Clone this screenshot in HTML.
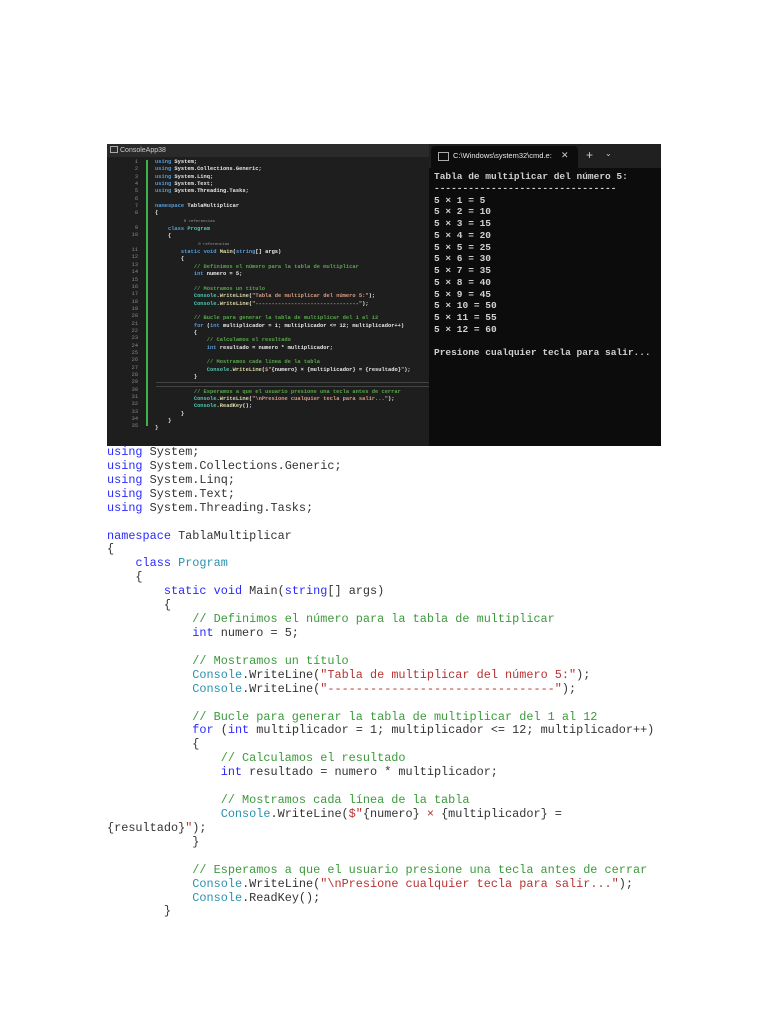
<!DOCTYPE html>
<html><head><meta charset="utf-8"><style>
body{margin:0;width:768px;height:1024px;background:#fff;position:relative;overflow:hidden;font-family:"Liberation Sans",sans-serif}
.abs{position:absolute}
pre{margin:0;font-family:"Liberation Mono",monospace}
.k{color:#2a2aff}.c{color:#3c9a3c}.s{color:#b83232}.t{color:#2b91af}
.ik{color:#569cd6}.it{color:#4ec9b0}.ic{color:#57a64a}.is{color:#d69d85}.im{color:#dcdcaa}
</style></head><body>
<!-- IDE -->
<div class="abs" style="left:107px;top:144px;width:322px;height:302px;background:#1e1e1e"></div>
<div class="abs" style="left:107px;top:144px;width:322px;height:13px;background:#2a2a2a;color:#ccc;font-size:7px;line-height:13px"><span style="display:inline-block;width:6px;height:5px;border:1px solid #aaa;margin:0 2px 0 3px;vertical-align:-1px"></span>ConsoleApp38</div>
<div class="abs" style="left:146px;top:160px;width:2px;height:266px;background:#3fb04a"></div>
<div class="abs" style="left:156px;top:382px;width:273px;height:1px;background:#444"></div>
<div class="abs" style="left:156px;top:386px;width:273px;height:1px;background:#444"></div>
<pre class="abs" style="left:120px;top:159px;width:18px;text-align:right;font-size:5.3px;line-height:7.35px;color:#8a8a8a">1
2
3
4
5
6
7
8

9
10

11
12
13
14
15
16
17
18
19
20
21
22
23
24
25
26
27
28
29
30
31
32
33
34
35</pre>
<pre class="abs" style="left:155px;top:159px;font-size:5.4px;line-height:7.35px;color:#e8e8e8;font-weight:bold"><span class="ik">using</span> System;
<span class="ik">using</span> System.Collections.Generic;
<span class="ik">using</span> System.Linq;
<span class="ik">using</span> System.Text;
<span class="ik">using</span> System.Threading.Tasks;

<span class="ik">namespace</span> TablaMultiplicar
{
<span style="font-size:4px;color:#999;font-weight:normal">            0 referencias</span>
    <span class="ik">class</span> <span class="it">Program</span>
    {
<span style="font-size:4px;color:#999;font-weight:normal">                  0 referencias</span>
        <span class="ik">static</span> <span class="ik">void</span> <span class="im">Main</span>(<span class="ik">string</span>[] args)
        {
            <span class="ic">// Definimos el número para la tabla de multiplicar</span>
            <span class="ik">int</span> numero = 5;

            <span class="ic">// Mostramos un título</span>
            <span class="it">Console</span>.<span class="im">WriteLine</span>(<span class="is">"Tabla de multiplicar del número 5:"</span>);
            <span class="it">Console</span>.<span class="im">WriteLine</span>(<span class="is">"--------------------------------"</span>);

            <span class="ic">// Bucle para generar la tabla de multiplicar del 1 al 12</span>
            <span class="ik">for</span> (<span class="ik">int</span> multiplicador = 1; multiplicador &lt;= 12; multiplicador++)
            {
                <span class="ic">// Calculamos el resultado</span>
                <span class="ik">int</span> resultado = numero * multiplicador;

                <span class="ic">// Mostramos cada línea de la tabla</span>
                <span class="it">Console</span>.<span class="im">WriteLine</span>(<span class="is">$"</span>{numero} × {multiplicador} = {resultado}<span class="is">"</span>);
            }

            <span class="ic">// Esperamos a que el usuario presione una tecla antes de cerrar</span>
            <span class="it">Console</span>.<span class="im">WriteLine</span>(<span class="is">"\nPresione cualquier tecla para salir..."</span>);
            <span class="it">Console</span>.<span class="im">ReadKey</span>();
        }
    }
}</pre>
<!-- Terminal -->
<div class="abs" style="left:429px;top:144px;width:232px;height:302px;background:#0c0c0c"></div>
<div class="abs" style="left:429px;top:144px;width:232px;height:24px;background:#202020"></div>
<div class="abs" style="left:431px;top:146px;width:147px;height:22px;background:#0c0c0c;border-radius:4px 4px 0 0"></div>
<div class="abs" style="left:438px;top:152px;width:9px;height:7px;border:1px solid #aaa"></div>
<div class="abs" style="left:453px;top:151px;color:#e8e8e8;font-size:7.5px;line-height:10px">C:\Windows\system32\cmd.e:</div>
<div class="abs" style="left:561px;top:150px;color:#ccc;font-size:9px">✕</div>
<div class="abs" style="left:586px;top:148px;color:#ccc;font-size:12px">+</div>
<div class="abs" style="left:605px;top:149px;color:#ccc;font-size:8px">⌄</div>
<pre class="abs" style="left:434px;top:171px;font-size:9.5px;line-height:11.75px;color:#d0d0d0;font-weight:bold">Tabla de multiplicar del número 5:
--------------------------------
5 × 1 = 5
5 × 2 = 10
5 × 3 = 15
5 × 4 = 20
5 × 5 = 25
5 × 6 = 30
5 × 7 = 35
5 × 8 = 40
5 × 9 = 45
5 × 10 = 50
5 × 11 = 55
5 × 12 = 60

Presione cualquier tecla para salir...</pre>
<!-- Code text -->
<pre class="abs" style="left:107px;top:446px;font-size:11.85px;line-height:13.92px;color:#333"><span class="k">using</span> System;
<span class="k">using</span> System.Collections.Generic;
<span class="k">using</span> System.Linq;
<span class="k">using</span> System.Text;
<span class="k">using</span> System.Threading.Tasks;

<span class="k">namespace</span> TablaMultiplicar
{
    <span class="k">class</span> <span class="t">Program</span>
    {
        <span class="k">static</span> <span class="k">void</span> Main(<span class="k">string</span>[] args)
        {
            <span class="c">// Definimos el número para la tabla de multiplicar</span>
            <span class="k">int</span> numero = 5;

            <span class="c">// Mostramos un título</span>
            <span class="t">Console</span>.WriteLine(<span class="s">"Tabla de multiplicar del número 5:"</span>);
            <span class="t">Console</span>.WriteLine(<span class="s">"--------------------------------"</span>);

            <span class="c">// Bucle para generar la tabla de multiplicar del 1 al 12</span>
            <span class="k">for</span> (<span class="k">int</span> multiplicador = 1; multiplicador &lt;= 12; multiplicador++)
            {
                <span class="c">// Calculamos el resultado</span>
                <span class="k">int</span> resultado = numero * multiplicador;

                <span class="c">// Mostramos cada línea de la tabla</span>
                <span class="t">Console</span>.WriteLine(<span class="s">$"</span>{numero} <span class="s">×</span> {multiplicador} =
{resultado}<span class="s">"</span>);
            }

            <span class="c">// Esperamos a que el usuario presione una tecla antes de cerrar</span>
            <span class="t">Console</span>.WriteLine(<span class="s">"\nPresione cualquier tecla para salir..."</span>);
            <span class="t">Console</span>.ReadKey();
        }</pre>
</body></html>
